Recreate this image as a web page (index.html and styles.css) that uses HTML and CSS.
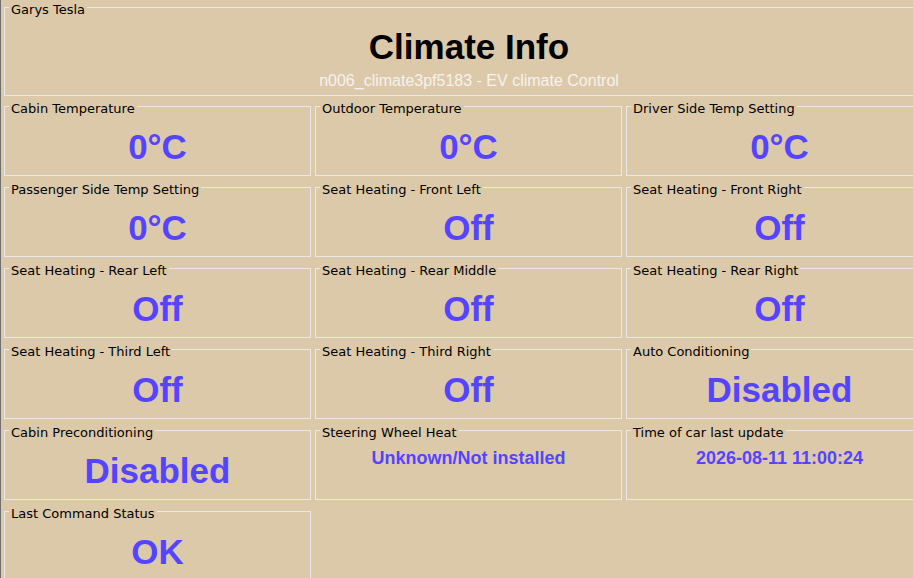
FILE: index.html
```html
<!DOCTYPE html>
<html>
<head>
<meta charset="utf-8">
<title>Climate Info</title>
<link rel="stylesheet" href="styles.css">
</head>
<body>
<div class="page">
  <fieldset class="header">
    <legend>Garys Tesla</legend>
    <h1 class="title">Climate Info</h1>
    <div class="subtitle">n006_climate3pf5183 - EV climate Control</div>
  </fieldset>
  <div class="grid">
    <fieldset class="cell"><legend>Cabin Temperature</legend><div class="value">0°C</div></fieldset>
    <fieldset class="cell"><legend>Outdoor Temperature</legend><div class="value">0°C</div></fieldset>
    <fieldset class="cell"><legend>Driver Side Temp Setting</legend><div class="value">0°C</div></fieldset>
    <fieldset class="cell"><legend>Passenger Side Temp Setting</legend><div class="value">0°C</div></fieldset>
    <fieldset class="cell"><legend>Seat Heating - Front Left</legend><div class="value">Off</div></fieldset>
    <fieldset class="cell"><legend>Seat Heating - Front Right</legend><div class="value">Off</div></fieldset>
    <fieldset class="cell"><legend>Seat Heating - Rear Left</legend><div class="value">Off</div></fieldset>
    <fieldset class="cell"><legend>Seat Heating - Rear Middle</legend><div class="value">Off</div></fieldset>
    <fieldset class="cell"><legend>Seat Heating - Rear Right</legend><div class="value">Off</div></fieldset>
    <fieldset class="cell"><legend>Seat Heating - Third Left</legend><div class="value">Off</div></fieldset>
    <fieldset class="cell"><legend>Seat Heating - Third Right</legend><div class="value">Off</div></fieldset>
    <fieldset class="cell"><legend>Auto Conditioning</legend><div class="value">Disabled</div></fieldset>
    <fieldset class="cell"><legend>Cabin Preconditioning</legend><div class="value">Disabled</div></fieldset>
    <fieldset class="cell"><legend>Steering Wheel Heat</legend><div class="value small">Unknown/Not installed</div></fieldset>
    <fieldset class="cell"><legend>Time of car last update</legend><div class="value small">2026-08-11 11:00:24</div></fieldset>
    <fieldset class="cell"><legend>Last Command Status</legend><div class="value">OK</div></fieldset>
  </div>
</div>
</body>
</html>
```
FILE: styles.css
```css
html, body {
  margin: 0;
  padding: 0;
  background: #dcc9aa;
  overflow: hidden;
}
.page {
  border-left: 1px solid #6f6f6f;
  padding-left: 3px;
  min-height: 100vh;
  width: 930px;
  font-family: "DejaVu Sans", sans-serif;
  font-size: 13px;
  color: #000;
}
fieldset {
  margin: 0;
  padding: 0;
  border: 1px solid #ebe9e6;
  box-sizing: border-box;
  min-width: 0;
  text-align: left;
}
legend {
  margin-left: 4px;
  padding: 4px 2px 0;
  font-family: "DejaVu Sans", sans-serif;
  font-size: 13px;
  line-height: 15px;
  color: #000;
}
.header {
  width: 930px;
  height: 98px;
  margin-top: -2px;
  margin-bottom: 1px;
}
.title {
  margin: 10px 0 0;
  text-align: center;
  font-family: "Liberation Sans", Arial, sans-serif;
  font-size: 35px;
  line-height: 40px;
  font-weight: bold;
  color: #000;
}
.subtitle {
  margin-top: 5px;
  text-align: center;
  font-family: "Liberation Sans", Arial, sans-serif;
  font-size: 16px;
  line-height: 18px;
  color: #f6f3ee;
}
.grid {
  display: grid;
  grid-template-columns: repeat(3, 307px);
  grid-auto-rows: 79px;
  gap: 2px 4px;
}
.cell {
  height: 79px;
}
.value {
  margin-top: 11px;
  text-align: center;
  font-family: "Liberation Sans", Arial, sans-serif;
  font-size: 35px;
  line-height: 40px;
  font-weight: bold;
  color: #5544ff;
}
.value.small {
  margin-top: 8px;
  font-size: 18px;
  line-height: 21px;
}
```
